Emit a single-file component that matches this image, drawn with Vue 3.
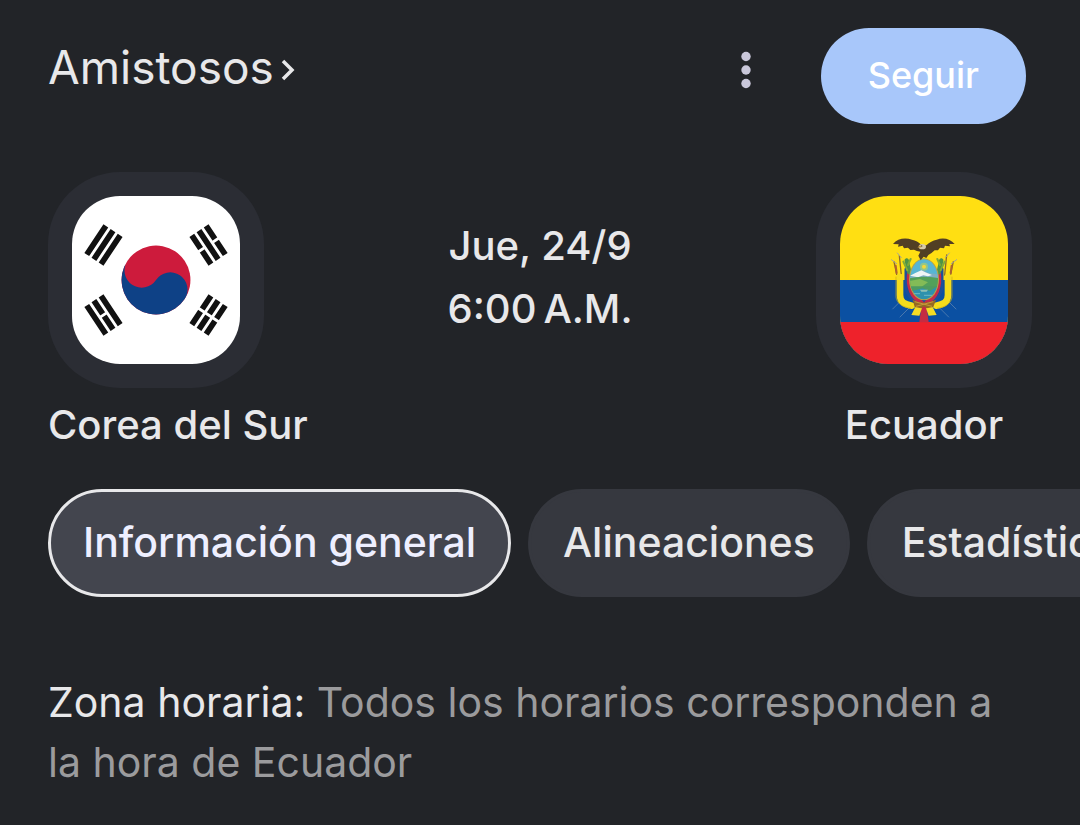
<template>
  <main class="match">
    <header class="header">
      <h1 class="league">
        <a href="#">
          {{ league }}
          <svg class="chevron" viewBox="0 0 16 24" aria-hidden="true">
            <path d="M3 3l9 9-9 9" />
          </svg>
        </a>
      </h1>
      <div class="actions">
        <button type="button" class="menu-btn" aria-label="Más opciones">
          <svg viewBox="0 0 12 40" aria-hidden="true">
            <circle cx="6" cy="6.5" r="4.7" />
            <circle cx="6" cy="20" r="4.7" />
            <circle cx="6" cy="33.5" r="4.7" />
          </svg>
        </button>
        <button type="button" class="follow-btn">Seguir</button>
      </div>
    </header>

    <section class="score">
      <div class="team">
        <div class="badge">
          <svg class="flag" viewBox="0 0 168 168" aria-hidden="true">
            <rect width="168" height="168" fill="#fff" />
            <g transform="translate(84 84) scale(2.87)">
              <g transform="rotate(-56.31)">
                <path class="bars" d="M-6-25H6M-6-22H6M-6-19H6M-6 25H6M-6 22H6M-6 19H6" />
                <path class="cut" d="M0 17v10" />
                <circle r="12" fill="#cd1b3c" />
                <path fill="#0e4186" d="M0-12A6 6 0 0 0 0 0A6 6 0 0 1 0 12A12 12 0 0 1 0-12Z" />
              </g>
              <g transform="rotate(-123.69)">
                <path class="bars" d="M-6-25H6M-6-22H6M-6-19H6M-6 25H6M-6 22H6M-6 19H6" />
                <path class="cut" d="M0-23.5v3M0 17v3.5M0 23.5v3" />
              </g>
            </g>
          </svg>
        </div>
        <h2>Corea del Sur</h2>
      </div>

      <p class="kickoff">
        <span>Jue, 24/9</span>
        <span>6:00&#8239;A.M.</span>
      </p>

      <div class="team away">
        <div class="badge">
          <svg class="flag" viewBox="0 0 168 168" aria-hidden="true">
            <rect width="168" height="168" fill="#ffdf12" />
            <rect y="84" width="168" height="84" fill="#0b50a2" />
            <rect y="126" width="168" height="42" fill="#ee222b" />
            <!-- coat of arms -->
            <g transform="translate(40 29) scale(.3333)">
              <g fill="none" stroke-linecap="round">
                <path stroke="#4a78ae" stroke-width="3" d="M58 232L38 252M86 250L60 276M180 250L206 276M208 232L228 252" />
                <path stroke="#8a6a2c" stroke-width="4" d="M58 92L64 150M200 90L194 150M42 110L50 148M220 110L212 148" />
                <path stroke="#a5a59a" stroke-width="3" d="M34 104L50 116M230 104L214 116M52 84L64 98M208 84L196 98" />
                <path stroke="#b0642d" stroke-width="6" d="M47 122L50 144M215 122L212 144" />
                <path stroke="#f4dc1c" stroke-width="20" d="M60 156V210C60 232 74 238 96 242M204 156V210C204 232 190 238 168 242" />
                <path stroke="#c8ac18" stroke-width="2" d="M48 156V216C50 236 68 246 92 250M216 156V216C214 236 196 246 172 250" />
                <path stroke="#1c4f9b" stroke-width="9" d="M78 132V190C82 210 94 224 110 234M186 132V190C182 210 170 224 154 234" />
                <path stroke="#c22c49" stroke-width="13" d="M88 140C82 190 98 218 124 232M176 140C182 190 166 218 140 232" />
                <path stroke="#4f9347" stroke-width="13" d="M80 106L88 142M184 106L176 142" />
                <path stroke="#7faa38" stroke-width="6" d="M70 110L82 136M194 110L182 136M92 102L84 120M172 102L180 120" />
              </g>
              <path fill="#c52c42" d="M126 232h12l8 60h-28z" />
              <path fill="#f5dc24" d="M108 242l18 8-8 22-24-2zM156 242l-18 8 8 22 24-2z" />
              <path fill="#946a22" d="M98 224q34 18 70 0l-8 22-20 4-8-6-8 6-20-4z" />
              <path stroke="#c69a38" stroke-width="3" d="M104 230l52 14M160 230l-52 14" />
              <ellipse cx="132" cy="163" rx="45" ry="63" fill="#b9a345" />
              <clipPath id="shield">
                <ellipse cx="132" cy="163" rx="42" ry="60" />
              </clipPath>
              <g clip-path="url(#shield)">
                <rect x="88" y="100" width="90" height="62" fill="#57b5d3" />
                <circle cx="132" cy="125" r="12" fill="#91c68c" />
                <circle cx="132" cy="125" r="6" fill="#f2d83a" />
                <path fill="#7eaec2" d="M88 158l20-14 20-8 16 8 34 4v20H88z" />
                <path fill="#eef5f5" d="M90 152l16-8 18-8 12 6 20 8-12 4-14-3-16 6z" />
                <path fill="#52a05a" d="M88 160q40-10 90 0v26H88z" />
                <path fill="#83bb57" d="M88 168l32-6 24 10-20 14H88z" />
                <rect x="88" y="186" width="90" height="40" fill="#2e91ad" />
                <path fill="#4d9b61" d="M88 184h84l-22 14-22-8-40 10z" />
                <path fill="#8fc0b4" d="M120 194h24l-4 6h-16z" />
                <path stroke="#6bb9c4" stroke-width="3" d="M100 206h20M132 211h28" />
              </g>
              <g fill="#523f24">
                <path d="M39 57C52 40 76 37 96 44Q112 47 124 60L139 61Q153 47 170 44C190 36 212 42 224 57L208 57L210 64L195 62L192 70L180 68L174 76L164 76Q154 86 145 90L139 99L131 95L122 106L115 92L121 80Q110 79 102 74L91 75L84 68L72 70L68 62L54 65L56 58Z" />
                <ellipse cx="127" cy="65" rx="11" ry="8" fill="#d7c9aa" />
                <path fill="#ba8b2e" d="M120 61l-8 7 12-1z" />
                <circle cx="125" cy="63" r="2" />
              </g>
            </g>
          </svg>
        </div>
        <h2>Ecuador</h2>
      </div>
    </section>

    <nav class="tabs">
      <button
        v-for="tab in tabs"
        :key="tab"
        type="button"
        class="tab"
        :class="{ active: tab === activeTab }"
        @click="activeTab = tab"
      >
        {{ tab }}
      </button>
    </nav>

    <p class="timezone"><span>Zona horaria:</span> Todos los horarios corresponden a la hora de Ecuador</p>
  </main>
</template>

<script setup>
import { ref } from 'vue';

const league = 'Amistosos';
const tabs = ['Información general', 'Alineaciones', 'Estadísticas'];
const activeTab = ref(tabs[0]);
</script>

<style>
body {
  margin: 0;
  background: #222428;
}
</style>

<style scoped>
.match {
  padding: 28px 48px 32px;
  color: #e8e8ea;
  font-family: "Google Sans", Inter, Roboto, sans-serif;
  font-size: 41px;
}

.header {
  display: flex;
  justify-content: space-between;
  align-items: flex-start;
  padding-right: 6px;
}

.league {
  margin: 0;
  font-size: 46px;
  font-weight: 400;
  line-height: 78px;
}

.league a {
  display: flex;
  align-items: center;
  gap: 6px;
  color: inherit;
  text-decoration: none;
}

.chevron {
  width: 16px;
  height: 24px;
  margin-top: 6px;
  fill: none;
  stroke: currentColor;
  stroke-width: 3.5;
}

.actions {
  display: flex;
  align-items: flex-start;
  gap: 45px;
}

.menu-btn {
  width: 60px;
  height: 84px;
  padding: 0;
  border: none;
  background: none;
  cursor: pointer;
}

.menu-btn svg {
  display: block;
  width: 12px;
  height: 40px;
  margin: 0 auto;
  fill: #c9c7da;
}

.follow-btn {
  height: 96px;
  padding: 0 47px 2px;
  border: none;
  border-radius: 48px;
  background: #a8c7fa;
  color: #fff;
  font-family: inherit;
  font-size: 36px;
  font-weight: 500;
  cursor: pointer;
}

.score {
  display: grid;
  grid-template-columns: 1fr auto 1fr;
  margin-top: 48px;
}

.team h2 {
  margin: 7px 0 0;
  font-size: 40px;
  font-weight: 500;
  line-height: 60px;
}

.away {
  justify-self: end;
  text-align: center;
}

.badge {
  width: 216px;
  height: 216px;
  padding: 24px;
  box-sizing: border-box;
  border-radius: 72px;
  background: #2b2d34;
}

.flag {
  display: block;
  width: 168px;
  height: 168px;
  border-radius: 48px;
}

.bars {
  stroke: #111;
  stroke-width: 2;
}

.cut {
  stroke: #fff;
  stroke-width: 1;
}

.kickoff {
  margin: 42px 0 0;
  font-size: 40px;
  font-weight: 500;
  line-height: 63px;
  text-align: center;
}

.kickoff span {
  display: block;
}

.tabs {
  display: flex;
  gap: 17px;
  margin: 34px -48px 0;
  padding: 0 48px;
  overflow-x: auto;
  scrollbar-width: none;
}

.tab {
  flex: none;
  height: 108px;
  padding: 0 32px 3px;
  border: 3px solid #36383f;
  border-radius: 54px;
  background: #36383f;
  color: #e8e8ea;
  font-family: inherit;
  font-size: 41px;
  font-weight: 500;
  cursor: pointer;
}

.tab.active {
  border-color: #e8e8ea;
  background: #43454e;
  color: #eeefff;
}

.timezone {
  margin: 75px 0 0;
  color: #9b9b9d;
  line-height: 60px;
}

.timezone span {
  color: #e8e8ea;
}
</style>
